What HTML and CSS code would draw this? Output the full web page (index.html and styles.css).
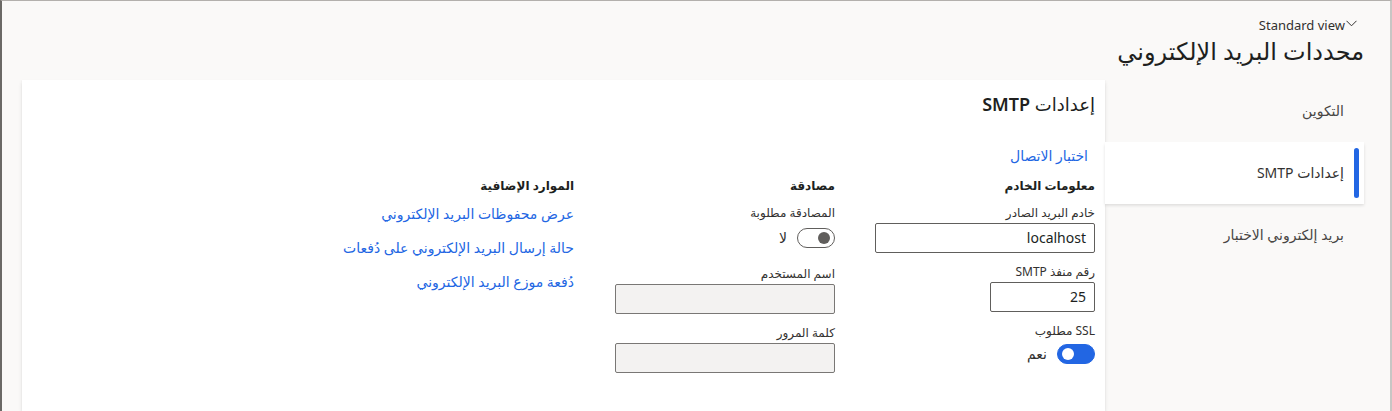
FILE: index.html
```html
<!DOCTYPE html>
<html lang="ar" dir="rtl">
<head>
<meta charset="utf-8">
<title>محددات البريد الإلكتروني</title>
<link rel="stylesheet" href="styles.css">
</head>
<body>
<div class="page">
  <header class="header">
    <div class="viewsel">
      <span class="viewsel-text" dir="ltr">Standard view<svg class="chev" width="11" height="7" viewBox="0 0 11 7"><path d="M0.5 0.8 L5.5 5.8 L10.5 0.8" fill="none" stroke="#323130" stroke-width="1"/></svg></span>
    </div>
    <h1 class="title">محددات البريد الإلكتروني</h1>
  </header>
  <div class="main">
    <nav class="nav">
      <div class="nav-item">التكوين</div>
      <div class="nav-item active">إعدادات SMTP<span class="indicator"></span></div>
      <div class="nav-item">بريد إلكتروني الاختبار</div>
    </nav>
    <section class="card">
      <h2 class="card-title">إعدادات <span class="latin">SMTP</span></h2>
      <div class="actions"><a class="link action-link">اختبار الاتصال</a></div>
      <div class="columns">
        <div class="col">
          <div class="col-head">معلومات الخادم</div>
          <label class="label">خادم البريد الصادر</label>
          <div class="input">localhost</div>
          <label class="label">رقم منفذ SMTP</label>
          <div class="input short">25</div>
          <label class="label">SSL مطلوب</label>
          <div class="toggle-row"><span class="toggle on"><span class="knob"></span></span><span class="toggle-text">نعم</span></div>
        </div>
        <div class="col">
          <div class="col-head">مصادقة</div>
          <label class="label">المصادقة مطلوبة</label>
          <div class="toggle-row first"><span class="toggle off"><span class="knob"></span></span><span class="toggle-text">لا</span></div>
          <label class="label spaced">اسم المستخدم</label>
          <div class="input disabled"></div>
          <label class="label">كلمة المرور</label>
          <div class="input disabled"></div>
        </div>
        <div class="col links-col">
          <div class="col-head">الموارد الإضافية</div>
          <a class="link res-link">عرض محفوظات البريد الإلكتروني</a>
          <a class="link res-link">حالة إرسال البريد الإلكتروني على دُفعات</a>
          <a class="link res-link">دُفعة موزع البريد الإلكتروني</a>
        </div>
      </div>
    </section>
  </div>
</div>
</body>
</html>
```

FILE: styles.css
```css
html, body {
  margin: 0;
  padding: 0;
}
body {
  font-family: "Noto Sans", "DejaVu Sans", sans-serif;
  color: #323130;
  background: #faf9f8;
}
.page {
  height: 411px;
  box-sizing: border-box;
  border-top: 1px solid #b3b0ad;
  border-left: 2px solid #6b6966;
  border-right: 2px solid #c8c6c4;
  background: #faf9f8;
  overflow: hidden;
  display: flex;
  flex-direction: column;
}
.header {
  padding: 14px 26px 0 0;
}
.viewsel {
  display: flex;
  margin-right: 7px;
  height: 20px;
}
.viewsel-text {
  font-size: 13px;
  line-height: 20px;
  color: #323130;
  display: inline-flex;
  align-items: center;
}
.chev {
  margin-left: 1px;
  margin-top: -4px;
}
.title {
  margin: 0;
  font-size: 24px;
  line-height: 32px;
  font-weight: 400;
  color: #201f1e;
}
.main {
  flex: 1;
  display: flex;
  margin-top: 13px;
  padding-right: 26px;
  padding-left: 20px;
}
.nav {
  width: 259px;
  flex: none;
}
.nav-item {
  position: relative;
  height: 62px;
  line-height: 62px;
  padding-right: 20px;
  font-size: 14px;
  color: #484644;
}
.nav-item.active {
  background: #fff;
  color: #323130;
  box-shadow: 0 1.6px 3px rgba(0, 0, 0, 0.12);
}
.indicator {
  position: absolute;
  right: 5px;
  top: 6px;
  width: 5px;
  height: 50px;
  border-radius: 3px;
  background: #2266e3;
}
.card {
  flex: 1;
  background: #fff;
  box-shadow: 0 1.6px 3.6px rgba(0, 0, 0, 0.13), 0 0.3px 0.9px rgba(0, 0, 0, 0.1);
  padding-right: 10px;
}
.card-title {
  margin: 10px 0 0 0;
  font-size: 18px;
  line-height: 28px;
  font-weight: 400;
  color: #201f1e;
}
.card-title .latin {
  font-weight: 600;
}
.actions {
  margin-top: 26px;
  padding-right: 7px;
  height: 20px;
}
.link {
  color: #2266e3;
  font-size: 14px;
  line-height: 20px;
  text-decoration: none;
}
.columns {
  display: flex;
  gap: 40px;
  margin-top: 12px;
}
.col {
  width: 220px;
  display: flex;
  flex-direction: column;
}
.links-col {
  width: 300px;
  margin-right: 1px;
}
.col-head {
  font-size: 12px;
  font-weight: 700;
  line-height: 20px;
  color: #201f1e;
}
.label {
  display: block;
  font-size: 12px;
  line-height: 20px;
  margin-top: 7px;
  color: #323130;
}
.label.spaced {
  margin-top: 16px;
}
.input + .label {
  margin-top: 9px;
}
.input {
  box-sizing: border-box;
  height: 30px;
  border: 1px solid #605e5c;
  border-radius: 2px;
  padding: 0 8px;
  font-size: 14px;
  line-height: 28px;
  color: #201f1e;
  background: #fff;
}
.input.short {
  width: 105px;
}
.input.disabled {
  background: #f3f2f1;
  border-color: #797775;
}
.toggle-row {
  display: flex;
  align-items: center;
  gap: 10px;
  margin-top: 3px;
  height: 20px;
}
.toggle-row.first {
  margin-top: 5px;
}
.toggle {
  box-sizing: border-box;
  width: 38px;
  height: 20px;
  border-radius: 10px;
  display: flex;
  align-items: center;
  padding: 0 4px;
}
.toggle.on {
  background: #2266e3;
  border: 1px solid #2266e3;
  justify-content: flex-end;
}
.toggle.off {
  background: #fff;
  border: 1px solid #605e5c;
  justify-content: flex-start;
}
.knob {
  width: 12px;
  height: 12px;
  border-radius: 50%;
}
.toggle.on .knob {
  background: #fff;
}
.toggle.off .knob {
  background: #605e5c;
}
.toggle-text {
  font-size: 14px;
  line-height: 20px;
  color: #323130;
}
.res-link {
  display: block;
  margin-top: 8px;
}
.res-link + .res-link {
  margin-top: 14px;
}
```
